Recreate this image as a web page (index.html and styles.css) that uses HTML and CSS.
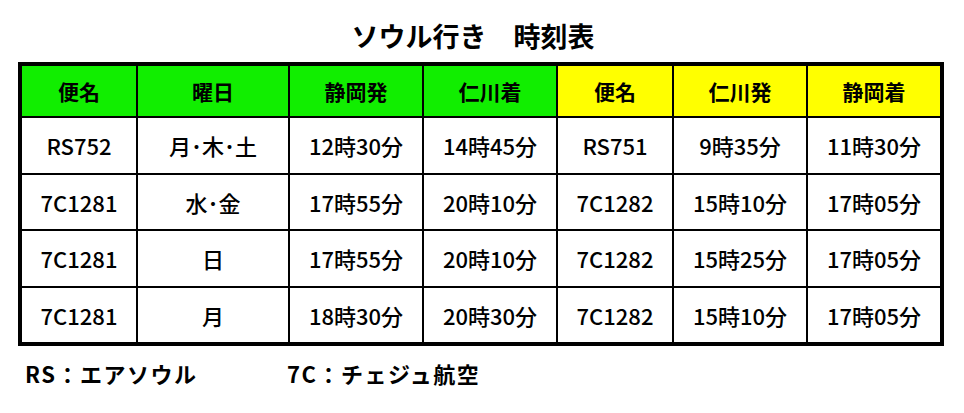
FILE: index.html
```html
<!DOCTYPE html>
<html lang="ja">
<head>
<meta charset="utf-8">
<link rel="stylesheet" href="styles.css">
</head>
<body>
<div class="page">
  <h1 class="title">ソウル行き　時刻表</h1>
  <table class="timetable">
    <colgroup>
      <col class="c1"><col class="c2"><col class="c3"><col class="c4"><col class="c5"><col class="c6"><col class="c7">
    </colgroup>
    <thead>
      <tr>
        <th class="green">便名</th>
        <th class="green">曜日</th>
        <th class="green">静岡発</th>
        <th class="green">仁川着</th>
        <th class="yellow">便名</th>
        <th class="yellow">仁川発</th>
        <th class="yellow last">静岡着</th>
      </tr>
    </thead>
    <tbody>
      <tr>
        <td>RS752</td><td>月･木･土</td><td>12時30分</td><td>14時45分</td><td>RS751</td><td>9時35分</td><td class="last">11時30分</td>
      </tr>
      <tr>
        <td>7C1281</td><td>水･金</td><td>17時55分</td><td>20時10分</td><td>7C1282</td><td>15時10分</td><td class="last">17時05分</td>
      </tr>
      <tr>
        <td>7C1281</td><td>日</td><td>17時55分</td><td>20時10分</td><td>7C1282</td><td>15時25分</td><td class="last">17時05分</td>
      </tr>
      <tr class="lastrow">
        <td>7C1281</td><td>月</td><td>18時30分</td><td>20時30分</td><td>7C1282</td><td>15時10分</td><td class="last">17時05分</td>
      </tr>
    </tbody>
  </table>
  <div class="notes">
    <span class="note first">RS：エアソウル</span>
    <span class="note">7C：チェジュ航空</span>
  </div>
</div>
</body>
</html>
```

FILE: styles.css
```css
html, body {
  margin: 0;
  padding: 0;
  background: #ffffff;
}

body {
  font-family: "Noto Sans CJK JP", "Noto Sans", sans-serif;
  color: #000000;
}

.page {
  width: 964px;
  padding-left: 18px;
  box-sizing: border-box;
}

.title {
  margin: 0;
  height: 62px;
  box-sizing: border-box;
  padding-top: 10px;
  padding-right: 36px;
  display: flex;
  align-items: center;
  justify-content: center;
  font-size: 27px;
  font-weight: 700;
  line-height: 30px;
}

.timetable {
  width: 926px;
  table-layout: fixed;
  border-collapse: separate;
  border-spacing: 0;
  border: 4px solid #000;
}

.c1 { width: 116px; }
.c2 { width: 152px; }
.c3 { width: 134px; }
.c4 { width: 134px; }
.c5 { width: 116px; }
.c6 { width: 134px; }
.c7 { width: 132px; }

.timetable th,
.timetable td {
  padding: 0;
  text-align: center;
  vertical-align: middle;
  border-right: 2px solid #000;
  border-bottom: 2px solid #000;
  font-size: 22px;
  line-height: 24px;
}

.timetable th {
  height: 50px;
  font-size: 21px;
  font-weight: 700;
}

.timetable td {
  height: 54.5px;
  font-weight: 500;
}

.timetable .last {
  border-right: none;
}

.timetable .lastrow td {
  border-bottom: none;
}

.green {
  background: #11ee00;
}

.yellow {
  background: #ffff00;
}

.notes {
  display: flex;
  padding-left: 7px;
  padding-top: 14px;
  font-size: 22px;
  font-weight: 700;
  line-height: 26px;
}

.note {
  letter-spacing: 1.5px;
}

.note.first {
  width: 262px;
}
```
